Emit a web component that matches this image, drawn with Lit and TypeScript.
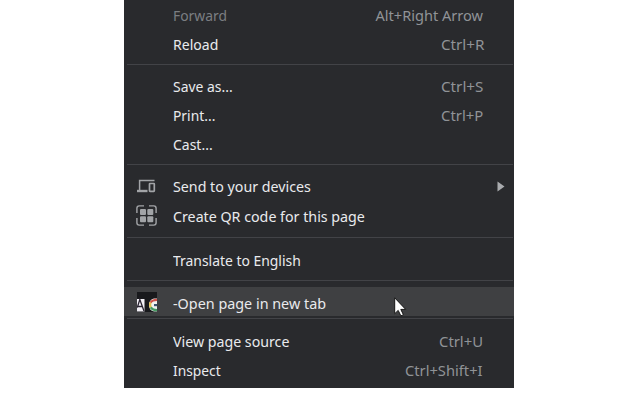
import { LitElement, html, css, svg, nothing } from "lit";
import { customElement } from "lit/decorators.js";

interface Item {
  label: string;
  width: number;
  keys?: string;
  keysWidth?: number;
  end?: number;
  icon?: "devices" | "qr" | "site";
  disabled?: boolean;
  active?: boolean;
  submenu?: boolean;
  height?: number;
}
interface Rule {
  before: number;
  after: number;
}

const entries: (Item | Rule)[] = [
  { label: "Forward", width: 53.5, keys: "Alt+Right Arrow", keysWidth: 107.5, disabled: true },
  { label: "Reload", width: 45.5, keys: "Ctrl+R", keysWidth: 43, end: 1 },
  { before: 5, after: 7 },
  { label: "Save as...", width: 59.5, keys: "Ctrl+S", keysWidth: 42 },
  { label: "Print...", width: 42, keys: "Ctrl+P", keysWidth: 42 },
  { label: "Cast...", width: 39.5 },
  { before: 5, after: 7 },
  { label: "Send to your devices", width: 137.5, icon: "devices", submenu: true },
  { label: "Create QR code for this page", width: 191.5, icon: "qr", height: 30 },
  { before: 6, after: 8 },
  { label: "Translate to English", width: 127.5 },
  { before: 5, after: 6 },
  { label: "-Open page in new tab", width: 153.5, icon: "site", active: true },
  { before: 2, after: 8 },
  { label: "View page source", width: 116.5, keys: "Ctrl+U", keysWidth: 44 },
  { label: "Inspect", width: 47.5, keys: "Ctrl+Shift+I", keysWidth: 78 },
];

const icons = {
  devices: svg`<svg width="22" height="22" viewBox="0 0 22 22" fill="none" stroke="#a2a4a7" stroke-width="1.5">
    <path d="M18.500 4.500H3.600V14" /><path d="M1 15h10.500" stroke-width="2.400" />
    <rect x="13.500" y="7.500" width="4.800" height="7.800" rx=".5" stroke-width="1.700" /></svg>`,
  qr: svg`<svg width="22" height="22" viewBox="0 0 22 22" fill="none" stroke="#a2a4a7" stroke-width="1.4">
    <path d="M.9 8V3.200Q.9.9 3.200.9H8M13 .9h4.800q2.300 0 2.300 2.300V8M20.100 13v4.800q0 2.300-2.300 2.300H13M8 20.100H3.200Q.9 20.100.9 17.800V13" />
    <g fill="#a2a4a7" stroke="none"><rect x="4" y="4" width="6" height="6" rx="1"/><rect x="11.300" y="4" width="6" height="6" rx="1"/><rect x="4" y="11.300" width="6" height="6" rx="1"/><rect x="11.300" y="11.300" width="6" height="6" rx="1"/></g></svg>`,
  site: svg`<svg width="20" height="20" viewBox="0 0 20 20">
    <path fill="#18191c" d="M0 0h20v20H0z"/><path fill="#f1eff4" d="M0 7h7.500v12.500H0z"/>
    <path d="M.3 15.500 2.800 7.500 7 19M1 14.500h4.500" fill="none" stroke="#292431" stroke-width="1.300"/>
    <path fill="#f0f2f0" d="M20 6.500h-3q-5 1-5 6.500t5 6.500h3z"/>
    <g fill="none" stroke-width="2.200"><path stroke="#d0524a" d="M13.500 10.800Q15 7.800 20 7.800"/><path stroke="#e3c14c" d="M13.400 10.500q-.8 2.500.4 5"/><path stroke="#459b62" d="M13.700 15.300q2 2.900 6.300 2.900"/></g>
    <path fill="#3c536f" d="M17 12h3v2.200h-3z"/></svg>`,
};

@customElement("app-root")
export class AppRoot extends LitElement {
  static styles = css`
    :host { display: block; width: 640px; height: 400px; background: #fff; overflow: hidden; position: relative; }
    .menu {
      box-sizing: border-box; width: 390px; height: 388px; margin-left: 124px; padding-top: 1px;
      background: #292a2d; color: #e9eaed;
      font: 14.5px/29px "Noto Sans", "Open Sans", sans-serif;
    }
    .item { display: flex; align-items: center; height: 29px; padding: 0 31px 0 12px; }
    .tall { height: 30px; }
    .active { background: #3f4042; }
    .disabled { color: #7b7e82; }
    .icon { display: flex; align-items: center; width: 36.5px; }
    .site { padding-left: 1px; width: 35.5px; }
    .icon svg { display: block; }
    .label { flex: 1; }
    .active .label { padding-top: 3px; }
    .keys { color: #909397; }
    .fit { display: inline-block; white-space: pre; transform-origin: left center; }
    .keys .fit { transform-origin: right center; }
    .arrow { width: 8px; height: 11px; margin-right: -22px; display: block; }
    .rule { height: 1px; background: #424347; margin-left: 3px; margin-right: 1px; }
    .pointer { position: absolute; left: 394px; top: 297px; }
  `;

  firstUpdated() {
    this.renderRoot.querySelectorAll<HTMLElement>(".fit").forEach((el) => {
      el.style.transform = `scaleX(${Number(el.dataset.width) / el.offsetWidth})`;
    });
  }

  private fit(text: string, width: number) {
    return html`<span class="fit" data-width=${width}>${text}</span>`;
  }

  private row(e: Item | Rule) {
    if ("before" in e) {
      return html`<div class="rule" style="margin-top:${e.before}px;margin-bottom:${e.after}px"></div>`;
    }
    return html`<div class="item ${e.active ? "active" : ""} ${e.disabled ? "disabled" : ""} ${e.height ? "tall" : ""}">
      <span class="icon ${e.icon ?? ""}">${e.icon ? icons[e.icon] : nothing}</span>
      <span class="label">${this.fit(e.label, e.width)}</span>
      ${e.keys ? html`<span class="keys" style="margin-right:${-(e.end ?? 0)}px">${this.fit(e.keys, e.keysWidth!)}</span>` : nothing}
      ${e.submenu ? html`<svg class="arrow" viewBox="0 0 8 11"><path d="M.5 .5 7.500 5.500.5 10.500z" fill="#a9abae"/></svg>` : nothing}
    </div>`;
  }

  render() {
    return html`<div class="menu">${entries.map((e) => this.row(e))}</div>
      <svg class="pointer" width="14" height="20" viewBox="0 0 14 20"><path d="M.7.8v15.900l3.500-3.300 2.700 5.500 2.500-1.200-2.600-5.300h4.900z" fill="#fff" stroke="#151515" stroke-width="1"/></svg>`;
  }
}
